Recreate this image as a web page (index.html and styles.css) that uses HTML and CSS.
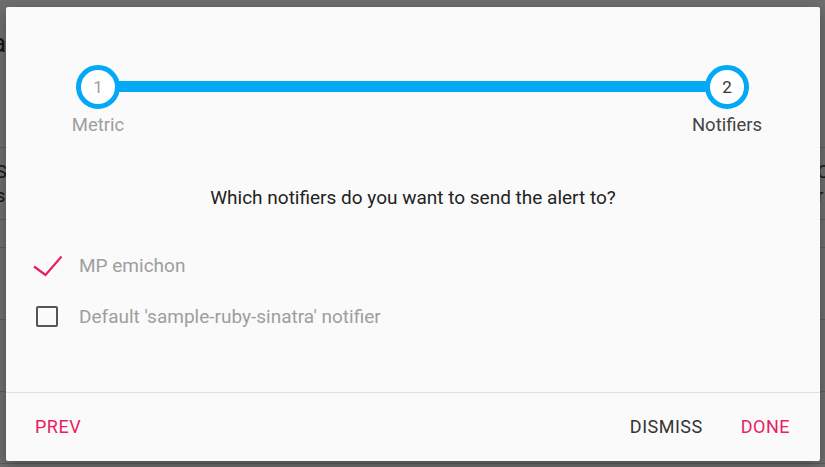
FILE: index.html
```html
<!DOCTYPE html>
<html>
<head>
<meta charset="utf-8">
<link rel="stylesheet" href="styles.css">
</head>
<body>
<div class="page">
  <div class="page-head"><span class="page-title">a</span></div>
  <div class="page-row">
    <div class="row-text"><span class="r1">S</span><span class="r2">s</span></div>
    <div class="row-text right"><span class="r1">C</span><span class="r2">r</span></div>
  </div>
  <div class="page-row short"></div>
  <div class="page-row"></div>
  <div class="page-row"></div>
  <div class="page-row"></div>
</div>
<div class="overlay">
  <div class="dialog">
    <div class="dialog-body">
      <div class="stepper">
        <div class="step">
          <div class="circle done">1</div>
          <div class="step-label muted">Metric</div>
        </div>
        <div class="connector"></div>
        <div class="step">
          <div class="circle active">2</div>
          <div class="step-label">Notifiers</div>
        </div>
      </div>
      <div class="question">Which notifiers do you want to send the alert to?</div>
      <ul class="options">
        <li class="option">
          <span class="icon">
            <svg width="30" height="22" viewBox="0 0 30 22"><path d="M1 11.5 L12.5 20 L28.5 1.5" fill="none" stroke="#e91e63" stroke-width="2.2"/></svg>
          </span>
          <span class="option-label">MP emichon</span>
        </li>
        <li class="option">
          <span class="icon"><span class="box"></span></span>
          <span class="option-label">Default 'sample-ruby-sinatra' notifier</span>
        </li>
      </ul>
    </div>
    <div class="dialog-footer">
      <button class="btn accent">PREV</button>
      <div class="spacer"></div>
      <button class="btn plain">DISMISS</button>
      <button class="btn accent">DONE</button>
    </div>
  </div>
</div>
</body>
</html>
```
FILE: styles.css
```css
* { box-sizing: border-box; }
html, body { margin: 0; padding: 0; }
body {
  width: 825px;
  height: 467px;
  overflow: hidden;
  background: #fff;
  font-family: Roboto, "Liberation Sans", sans-serif;
  position: relative;
}
.page { width: 825px; }
.page-head { height: 148px; border-bottom: 1px solid #d6d6d6; padding: 28px 0 0 0; }
.page-title { font-size: 26px; color: #333; margin-left: -8px; }
.page-row { height: 72px; border-bottom: 1px solid #d6d6d6; display: flex; justify-content: space-between; }
.page-row.short { height: 28px; }
.row-text { display: flex; flex-direction: column; padding-top: 12px; font-size: 18px; color: #333; margin-left: -4px; }
.row-text.right { margin-left: 0; margin-right: -4px; padding-left: 0; }
.row-text span { line-height: 24px; }

.overlay {
  position: absolute;
  inset: 0;
  background: rgba(0, 0, 0, 0.57);
  display: flex;
  align-items: center;
  justify-content: center;
}
.dialog {
  width: 814px;
  height: 454px;
  margin-top: 1px;
  margin-left: 1px;
  background: #fafafa;
  border-radius: 2px;
  display: flex;
  flex-direction: column;
  box-shadow: 0 4px 14px rgba(0,0,0,0.3);
}
.dialog-body { flex: 1; }

.stepper {
  display: flex;
  align-items: flex-start;
  padding: 58px 71px 0 70px;
}
.step {
  width: 44px;
  display: flex;
  flex-direction: column;
  align-items: center;
  position: relative;
  z-index: 1;
}
.circle {
  width: 44px;
  height: 44px;
  border: 5px solid #03a9f4;
  border-radius: 50%;
  background: #fff;
  display: flex;
  align-items: center;
  justify-content: center;
  font-size: 17px;
}
.circle.done { color: #9e9e9e; }
.circle.active { color: #333; }
.connector {
  flex: 1;
  height: 11px;
  margin: 16px -4px 0;
  background: #03a9f4;
}
.step-label {
  margin-top: 5px;
  font-size: 18.5px;
  line-height: 22px;
  white-space: nowrap;
  color: #444;
}
.step-label.muted { color: #9e9e9e; }

.question {
  margin-top: 50px;
  text-align: center;
  font-size: 19px;
  line-height: 24px;
  color: #222;
}

.options {
  list-style: none;
  margin: 30px 0 0;
  padding: 0 0 0 27px;
}
.option {
  height: 51px;
  display: flex;
  align-items: center;
}
.icon {
  width: 30px;
  height: 22px;
  margin-right: 16px;
  display: flex;
  align-items: center;
}
.icon svg { display: block; }
.box {
  width: 22px;
  height: 21px;
  margin-left: 3px;
  border: 2px solid #555;
  border-radius: 2px;
}
.option-label {
  font-size: 19px;
  color: #9e9e9e;
}

.dialog-footer {
  height: 69px;
  border-top: 1px solid #e0e0e0;
  display: flex;
  align-items: center;
  padding: 0 30px 0 29px;
}
.spacer { flex: 1; }
.btn {
  border: 0;
  background: none;
  padding: 0;
  font-family: inherit;
  font-size: 18px;
  letter-spacing: 0.5px;
  line-height: 24px;
}
.btn.accent { color: #e91e63; }
.btn.plain { color: #333; margin-right: 38px; }
```
